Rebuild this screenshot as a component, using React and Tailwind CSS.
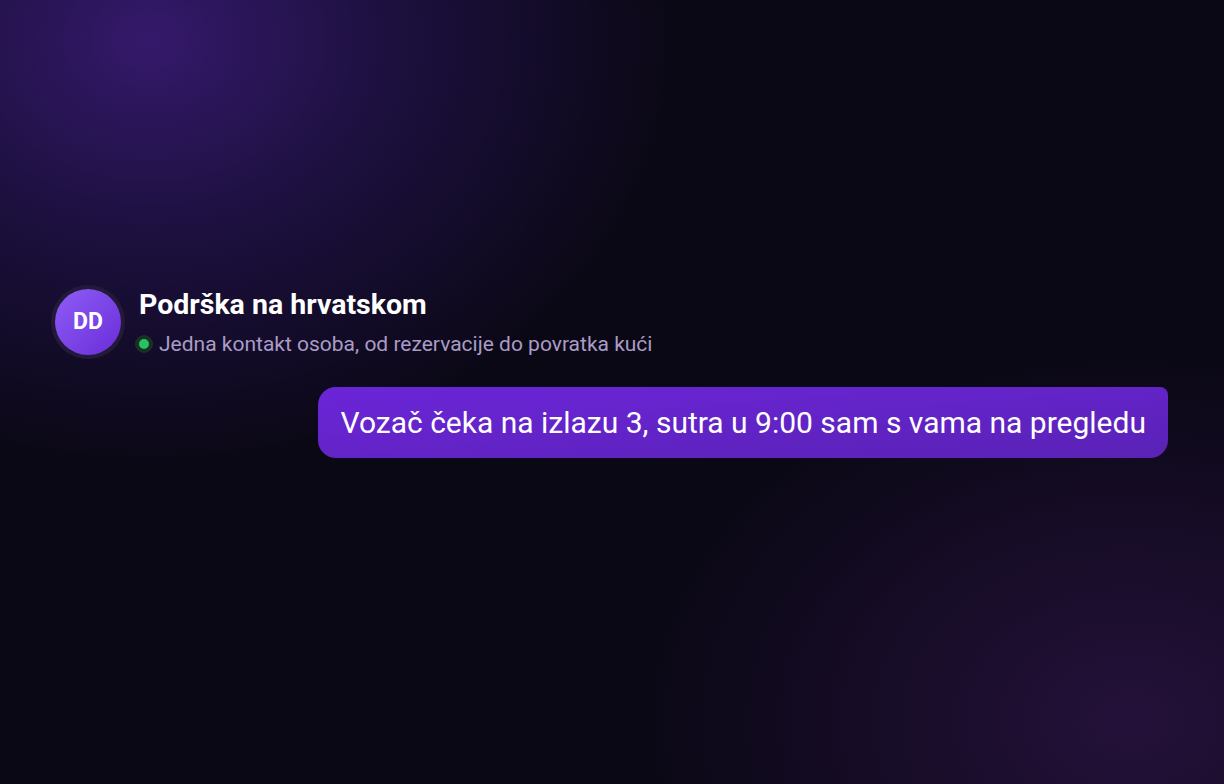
const App = () => {
  return (
    <div
      className="relative min-h-[784px] w-full overflow-hidden bg-[#0b0816]"
      style={{ fontFamily: "Roboto, 'Noto Sans', sans-serif" }}
    >
      <div className="pointer-events-none absolute inset-0 bg-[radial-gradient(ellipse_520px_420px_at_150px_40px,#35196b_0%,#1d1040_45%,rgba(11,8,22,0)_100%)]" />
      <div className="pointer-events-none absolute inset-0 bg-[radial-gradient(ellipse_480px_360px_at_1130px_720px,#24113a_0%,rgba(11,8,22,0)_100%)]" />

      <div className="relative flex flex-col pl-[51px] pr-[56px] pt-[285px]">
        <div className="flex items-start gap-[14px]">
          <div className="flex h-[74px] w-[74px] shrink-0 items-center justify-center rounded-full bg-[#221a38]">
            <div className="flex h-[66px] w-[66px] items-center justify-center rounded-full bg-gradient-to-br from-[#8f5cf7] to-[#6a2bd8] text-[23px] font-bold text-white">
              DD
            </div>
          </div>
          <div className="flex flex-col pt-[3px]">
            <div className="text-[28.5px] font-bold leading-[34px] text-white">Podrška na hrvatskom</div>
            <div className="mt-[10px] flex items-center gap-[6px] text-[21px] leading-[24px] text-[#a99cc6]">
              <span className="ml-[-4px] flex h-[18px] w-[18px] items-center justify-center rounded-full bg-[#1c2f27]">
                <span className="h-[10px] w-[10px] rounded-full bg-[#22c55e]" />
              </span>
              Jedna kontakt osoba, od rezervacije do povratka kući
            </div>
          </div>
        </div>

        <div className="mt-[28px] flex justify-end">
          <div className="rounded-[18px] rounded-tr-[8px] bg-gradient-to-br from-[#6b25d8] to-[#5a22b6] px-[22px] py-[17px] text-[30px] leading-[37px] text-white">
            Vozač čeka na izlazu 3, sutra u 9:00 sam s vama na pregledu
          </div>
        </div>
      </div>
    </div>
  );
};

export default App;
